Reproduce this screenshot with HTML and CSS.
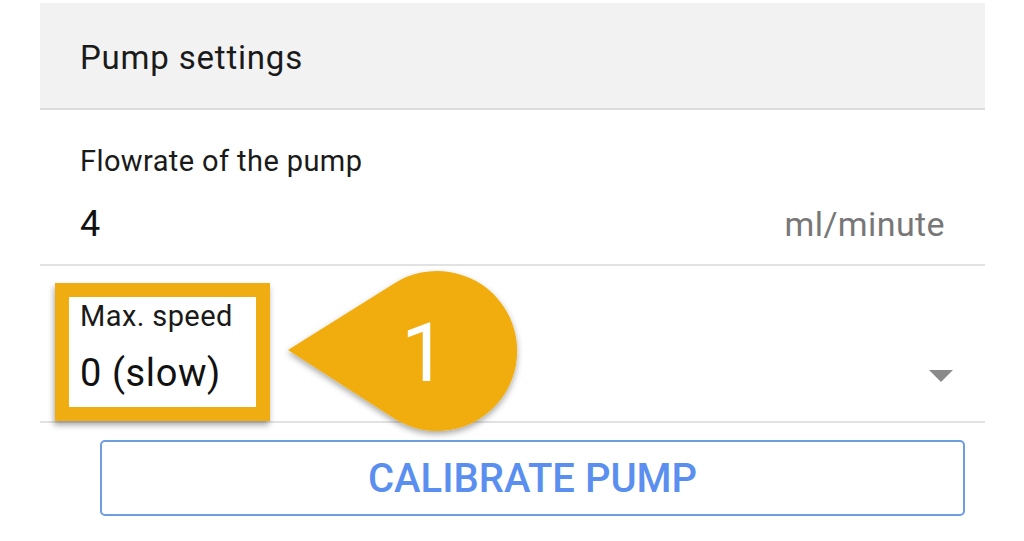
FILE: index.html
```html
<!DOCTYPE html>
<html>
<head>
<meta charset="utf-8">
<link rel="stylesheet" href="styles.css">
</head>
<body>
<div class="page">
  <div class="panel">
    <div class="header">Pump settings</div>
    <div class="field field-flow">
      <div class="label">Flowrate of the pump</div>
      <div class="value-row">
        <span class="value">4</span>
        <span class="unit">ml/minute</span>
      </div>
    </div>
    <div class="field field-speed">
      <div class="label">Max. speed</div>
      <div class="value-row">
        <span class="value">0 (slow)</span>
        <svg class="caret" width="24" height="12" viewBox="0 0 24 12"><path d="M0 0H24L12 12Z" fill="#8a8a8a"/></svg>
      </div>
      <div class="highlight"></div>
    </div>
    <button class="calibrate">CALIBRATE PUMP</button>
  </div>
  <svg class="callout" width="1024" height="541" viewBox="0 0 1024 541">
    <defs>
      <filter id="sh" x="-20%" y="-20%" width="140%" height="140%">
        <feDropShadow dx="0" dy="3" stdDeviation="3" flood-color="#000" flood-opacity="0.35"/>
      </filter>
    </defs>
    <path d="M288 350 L395 283 A80 80 0 1 1 395 419 Z" fill="#f0ad10" filter="url(#sh)"/>
    <text x="424" y="381" text-anchor="middle" class="num">1</text>
  </svg>
</div>
</body>
</html>
```

FILE: styles.css
```css
html, body {
  margin: 0;
  padding: 0;
  background: #ffffff;
}
body {
  font-family: Roboto, "Noto Sans", sans-serif;
  color: #1a1a1a;
  width: 1024px;
  height: 541px;
  overflow: hidden;
}
.page {
  position: relative;
  width: 1024px;
  height: 541px;
}
.panel {
  margin-left: 40px;
  width: 945px;
  padding-top: 3px;
  display: flex;
  flex-direction: column;
}
.header {
  height: 69px;
  padding: 36px 0 0 40px;
  background: #f2f2f2;
  border-bottom: 2px solid #dcdcdc;
  font-size: 33px;
  line-height: 38px;
  letter-spacing: 0.8px;
  color: #1a1a1a;
}
.field {
  position: relative;
  padding: 34px 40px 0 40px;
  border-bottom: 2px solid #e2e2e2;
}
.label {
  font-size: 29px;
  line-height: 34px;
  letter-spacing: 0.4px;
  color: #1a1a1a;
}
.value-row {
  display: flex;
  justify-content: space-between;
  align-items: baseline;
}
.value {
  font-size: 36px;
  line-height: 42px;
  color: #111;
}
.unit {
  font-size: 34px;
  line-height: 42px;
  letter-spacing: 0.4px;
  color: #777777;
}
.field-flow .value-row {
  margin-top: 25px;
  padding-bottom: 19px;
}
.field-speed {
  padding-top: 33px;
}
.field-speed .label {
  letter-spacing: 0.4px;
}
.field-speed .value {
  font-size: 38px;
  letter-spacing: 0.6px;
}
.field-speed .value-row {
  margin-top: 19px;
  padding-bottom: 27px;
  align-items: center;
}
.caret {
  margin-right: -8px;
  margin-top: 6px;
}
.highlight {
  position: absolute;
  left: 15px;
  top: 17px;
  width: 187px;
  height: 110px;
  border: 14px solid #f0ad12;
  box-shadow: -1px 4px 6px rgba(0, 0, 0, 0.35);
}
.calibrate {
  margin: 17px 20px 0 60px;
  height: 76px;
  border: 2px solid #6f9de2;
  border-radius: 5px;
  background: #ffffff;
  font-family: Roboto, "Noto Sans", sans-serif;
  font-weight: 500;
  font-size: 40px;
  color: #5a8ff0;
  padding: 0;
}
.callout {
  position: absolute;
  left: 0;
  top: 0;
  pointer-events: none;
}
.num {
  font-family: Roboto, "Noto Sans", sans-serif;
  font-size: 82px;
  fill: #ffffff;
}
```
